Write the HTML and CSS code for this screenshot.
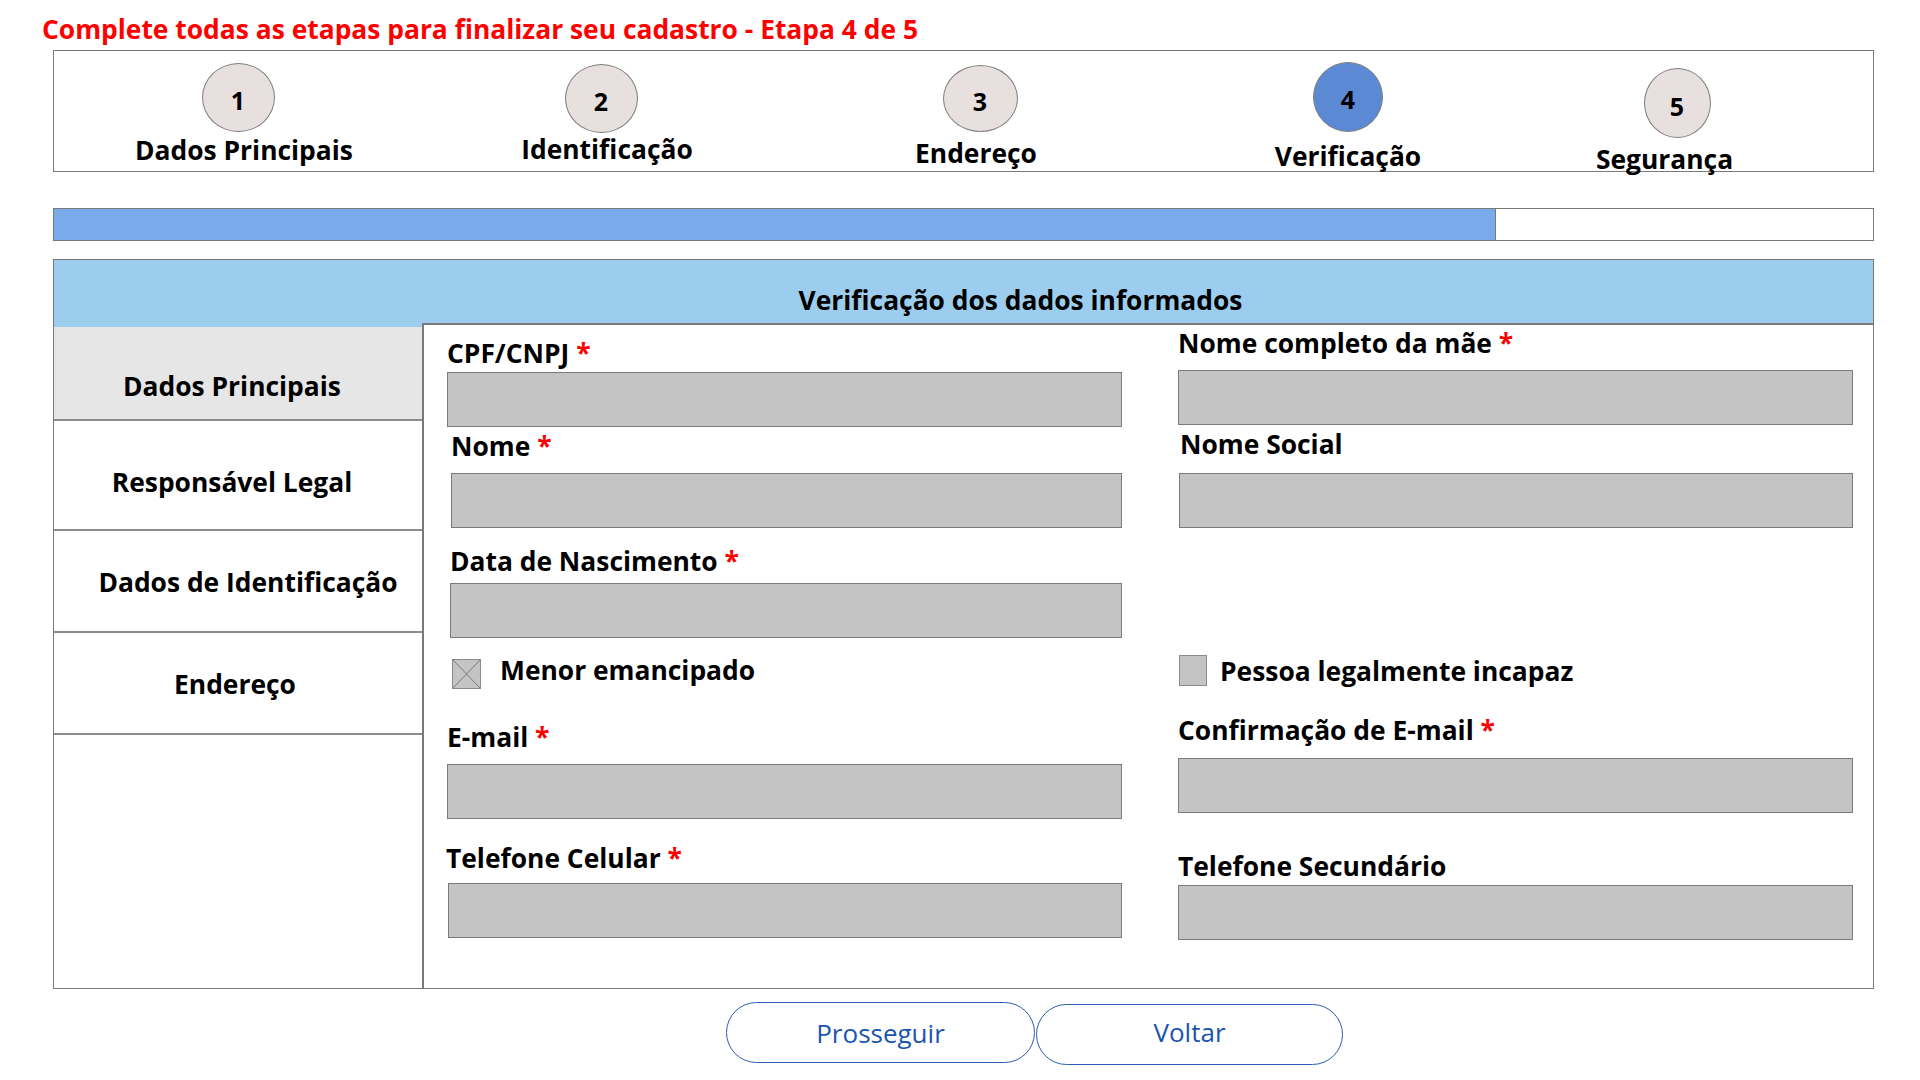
FILE: index.html
```html
<!DOCTYPE html>
<html lang="pt-BR">
<head>
<meta charset="utf-8">
<title>Cadastro - Etapa 4 de 5</title>
<link rel="stylesheet" href="styles.css">
</head>
<body>
<div class="page">
  <h1 class="title">Complete todas as etapas para finalizar seu cadastro - Etapa 4 de 5</h1>

  <div class="stepper">
    <div class="step s1"><div class="circle">1</div><div class="step-label">Dados Principais</div></div>
    <div class="step s2"><div class="circle">2</div><div class="step-label">Identificação</div></div>
    <div class="step s3"><div class="circle">3</div><div class="step-label">Endereço</div></div>
    <div class="step s4"><div class="circle active">4</div><div class="step-label">Verificação</div></div>
    <div class="step s5"><div class="circle">5</div><div class="step-label">Segurança</div></div>
  </div>

  <div class="progress"><div class="progress-fill" style="width:79.3%"></div></div>

  <section class="panel">
    <div class="panel-header">Verificação dos dados informados</div>
    <div class="panel-body">
      <nav class="sidebar">
        <div class="side-item i1 selected">Dados Principais</div>
        <div class="side-item i2">Responsável Legal</div>
        <div class="side-item i3">Dados de Identificação</div>
        <div class="side-item i4">Endereço</div>
      </nav>
      <div class="form">
        <div class="col col-left">
          <div class="field f-cpf">
            <label class="label">CPF/CNPJ <span class="req">*</span></label>
            <div class="input"></div>
          </div>
          <div class="field f-nome">
            <label class="label">Nome <span class="req">*</span></label>
            <div class="input"></div>
          </div>
          <div class="field f-data">
            <label class="label">Data de Nascimento <span class="req">*</span></label>
            <div class="input"></div>
          </div>
          <div class="check-row c-menor">
            <span class="checkbox">
              <svg width="29" height="30" viewBox="0 0 29 30"><line x1="1" y1="1" x2="28" y2="29" stroke="#7a7a7a" stroke-width="1"/><line x1="28" y1="1" x2="1" y2="29" stroke="#7a7a7a" stroke-width="1"/></svg>
            </span>
            <span class="check-text">Menor emancipado</span>
          </div>
          <div class="field f-email">
            <label class="label">E-mail <span class="req">*</span></label>
            <div class="input"></div>
          </div>
          <div class="field f-cel">
            <label class="label">Telefone Celular <span class="req">*</span></label>
            <div class="input"></div>
          </div>
        </div>
        <div class="col col-right">
          <div class="field f-mae">
            <label class="label">Nome completo da mãe <span class="req">*</span></label>
            <div class="input"></div>
          </div>
          <div class="field f-social">
            <label class="label">Nome Social</label>
            <div class="input"></div>
          </div>
          <div class="check-row c-pessoa">
            <span class="checkbox plain"></span>
            <span class="check-text">Pessoa legalmente incapaz</span>
          </div>
          <div class="field f-conf">
            <label class="label">Confirmação de E-mail <span class="req">*</span></label>
            <div class="input"></div>
          </div>
          <div class="field f-sec">
            <label class="label">Telefone Secundário</label>
            <div class="input"></div>
          </div>
        </div>
      </div>
    </div>
  </section>

  <div class="actions">
    <button class="btn btn-next">Prosseguir</button>
    <button class="btn btn-back">Voltar</button>
  </div>
</div>
</body>
</html>
```
FILE: styles.css
```css
* { box-sizing: border-box; }
html, body { margin: 0; padding: 0; background: #ffffff; }
body {
  font-family: "Open Sans", "Noto Sans", "DejaVu Sans", sans-serif;
  color: #000;
  width: 1920px;
  height: 1080px;
  overflow: hidden;
}
.page {
  padding-left: 53px;
  width: 1874px;
}
.title {
  margin: 14px 0 0 -11px;
  font-size: 26.4px;
  line-height: 30px;
  font-weight: 700;
  color: #ff0000;
}

/* Stepper */
.stepper {
  margin-top: 6px;
  height: 122px;
  border: 1px solid #7a7a7a;
  display: flex;
  align-items: flex-start;
}
.step {
  width: 240px;
  display: flex;
  flex-direction: column;
  align-items: center;
}
.step-label {
  font-size: 26.4px;
  line-height: 30px;
  font-weight: 700;
  white-space: nowrap;
}
.circle {
  width: 73px;
  height: 69px;
  border-radius: 50%;
  background: #e8dfdf;
  border: 1px solid #7f7f7f;
  display: flex;
  align-items: center;
  justify-content: center;
  font-size: 25px;
  font-weight: 700;
  padding-top: 4px;
}
.circle.active { background: #5b89d3; width: 70px; height: 70px; }
.s1 { margin-left: 64px; padding-top: 12px; }
.s1 .step-label { margin-top: 3px; margin-left: 12px; }
.s2 { margin-left: 123px; padding-top: 13px; }
.s2 .step-label { margin-top: 1px; margin-left: 12px; }
.s3 { margin-left: 139px; padding-top: 14px; }
.s3 .circle { width: 75px; height: 67px; }
.s3 .step-label { margin-top: 6px; margin-right: 8px; }
.s4 { margin-left: 128px; padding-top: 11px; }
.s4 .step-label { margin-top: 9px; }
.s5 { margin-left: 89px; padding-top: 17px; }
.s5 .circle { width: 67px; height: 70px; padding-top: 6px; }
.s5 .step-label { margin-top: 6px; margin-right: 25px; }

/* Progress */
.progress {
  margin-top: 36px;
  height: 33px;
  border: 1px solid #7a7a7a;
  background: #ffffff;
}
.progress-fill {
  height: 100%;
  background: #7aabeb;
  border-right: 1px solid #7a7a7a;
}

/* Panel */
.panel {
  margin-top: 18px;
  width: 1821px;
  height: 730px;
  border: 1px solid #7a7a7a;
  display: flex;
  flex-direction: column;
}
.panel-header {
  height: 67px;
  background: #9ccdee;
  font-size: 26.4px;
  line-height: 30px;
  font-weight: 700;
  text-align: center;
  padding: 25px 0 0 114px;
}
.panel-body {
  flex: 1;
  display: flex;
}
.sidebar {
  width: 368px;
  flex: none;
}
.side-item {
  font-size: 26.4px;
  line-height: 30px;
  font-weight: 700;
  text-align: center;
  white-space: nowrap;
  border-bottom: 2px solid #8c8c8c;
}
.side-item.selected { background: #e6e6e6; }
.i1 { height: 94px; padding-top: 44px; padding-right: 12px; }
.i2 { height: 110px; padding-top: 46px; padding-right: 12px; }
.i3 { height: 102px; padding-top: 36px; padding-left: 20px; }
.i4 { height: 102px; padding-top: 36px; padding-right: 6px; }

.form {
  flex: 1;
  margin-top: -4px;
  border-top: 2px solid #7a7a7a;
  border-left: 2px solid #7a7a7a;
  background: #ffffff;
  display: flex;
  padding-left: 23px;
  gap: 56px;
}
.col {
  width: 675px;
  display: flex;
  flex-direction: column;
}
.label {
  display: block;
  font-size: 26.4px;
  line-height: 30px;
  font-weight: 700;
  white-space: nowrap;
}
.req { color: #ff0000; }
.input {
  height: 55px;
  background: #c4c4c4;
  border: 1px solid #7b7b7b;
}

.f-cpf { margin-top: 13px; }
.f-cpf .input { margin-top: 4px; }
.f-nome { margin-top: 4px; padding-left: 4px; }
.f-nome .input { margin-top: 12px; }
.f-data { margin-top: 18px; padding-left: 3px; }
.f-data .input { margin-top: 7px; }
.f-email { margin-top: 33px; }
.f-email .input { margin-top: 12px; }
.f-cel { margin-top: 24px; }
.f-cel .label { margin-left: -1px; }
.f-cel .input { margin-top: 10px; margin-left: 1px; }

.f-mae { margin-top: 3px; }
.f-mae .input { margin-top: 12px; }
.f-social { margin-top: 4px; }
.f-social .label { margin-left: 2px; }
.f-social .input { margin-top: 14px; margin-left: 1px; }
.f-conf { margin-top: 30px; }
.f-conf .input { margin-top: 13px; }
.f-sec { margin-top: 38px; }
.f-sec .input { margin-top: 4px; }

.check-row {
  display: flex;
  align-items: flex-start;
  height: 30px;
}
.c-menor { margin-top: 21px; padding-left: 5px; gap: 19px; }
.c-pessoa { margin-top: 127px; padding-left: 1px; gap: 13px; }
.checkbox {
  width: 29px;
  height: 30px;
  background: #c4c4c4;
  border: 1px solid #8a8a8a;
  display: block;
  flex: none;
  position: relative;
  overflow: hidden;
}
.checkbox svg { position: absolute; left: -1px; top: -1px; }
.checkbox.plain { width: 28px; height: 31px; }
.check-text {
  font-size: 26.4px;
  line-height: 30px;
  font-weight: 700;
  margin-top: -4px;
  white-space: nowrap;
}
.c-pessoa .check-text { margin-top: 1px; }

/* Actions */
.actions {
  display: flex;
  align-items: flex-start;
  gap: 1px;
  padding-left: 673px;
  margin-top: 13px;
}
.btn {
  width: 309px;
  height: 61px;
  border: 1.5px solid #2c5fb3;
  border-radius: 31px;
  background: #ffffff;
  color: #1b55b0;
  font-family: "Open Sans", "Noto Sans", sans-serif;
  font-size: 26px;
  font-weight: 400;
  padding: 0;
}
.btn-back { width: 307px; margin-top: 2px; padding-bottom: 6px; }
```
